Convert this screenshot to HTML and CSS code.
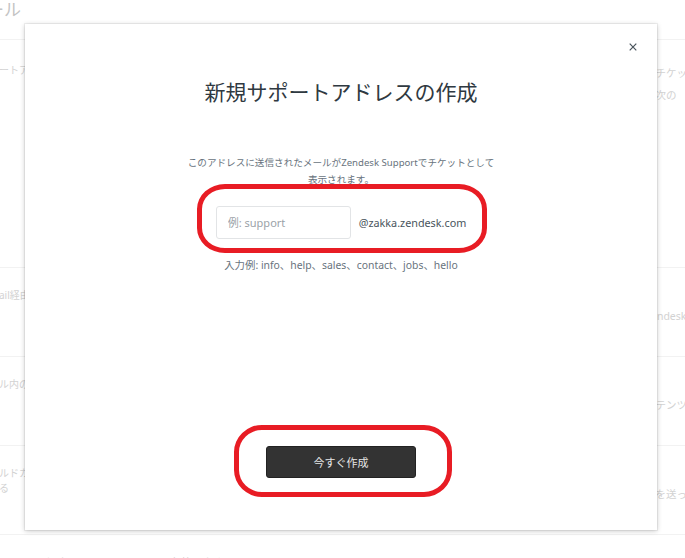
FILE: index.html
```html
<!DOCTYPE html>
<html lang="ja">
<head>
<meta charset="utf-8">
<title>新規サポートアドレスの作成</title>
<link rel="stylesheet" href="styles.css">
</head>
<body>
<div class="page">
  <header class="page-head"><h1 class="page-title">メール</h1></header>
  <div class="row row-first">
    <div class="label label-first">ートアドレス</div>
    <div class="content"></div>
    <div class="desc desc-first">てチケット<br>、次の</div>
  </div>
  <div class="row">
    <div class="label">ail経由のメール</div>
    <div class="content"></div>
    <div class="desc"><br>Zendesk</div>
  </div>
  <div class="row">
    <div class="label">ル内のリンク</div>
    <div class="content"></div>
    <div class="desc"><br>ンテンツ</div>
  </div>
  <div class="row">
    <div class="label">ルドカード<br>る</div>
    <div class="content"></div>
    <div class="desc"><br>ルを送っ</div>
  </div>
  <div class="row">
    <div class="label label-large">るメール返信</div>
    <div class="content"><span class="check">✓</span>有効にする</div>
    <div class="desc"></div>
  </div>
</div>

<div class="modal">
  <button class="close" aria-label="閉じる">
    <svg width="8" height="8" viewBox="0 0 8 8"><path d="M0.7 0.7 L7.3 7.3 M7.3 0.7 L0.7 7.3" stroke="#49545c" stroke-width="1.2" fill="none"/></svg>
  </button>
  <h2 class="modal-title">新規サポートアドレスの作成</h2>
  <p class="modal-desc">このアドレスに送信されたメールがZendesk Supportでチケットとして<br>表示されます。</p>
  <div class="field-row">
    <input class="field" type="text" placeholder="例: support">
    <span class="domain">@zakka.zendesk.com</span>
  </div>
  <p class="hint">入力例: info、help、sales、contact、jobs、hello</p>
  <button class="create">今すぐ作成</button>
</div>

<div class="mark mark-field"></div>
<div class="mark mark-button"></div>
</body>
</html>
```
FILE: styles.css
```css
* { box-sizing: border-box; }
html, body {
  margin: 0;
  padding: 0;
  background: #fff;
  overflow: hidden;
}
body {
  width: 685px;
  height: 558px;
  font-family: "Noto Sans", "Noto Sans CJK JP", sans-serif;
  position: relative;
}
.page {
  width: 685px;
  height: 558px;
  overflow: hidden;
  color: #d2d2d2;
  font-size: 10px;
}
.page-head {
  height: 40px;
  border-bottom: 1px solid #f2f2f2;
  overflow: hidden;
}
.page-title {
  margin: -2px 0 0 -30px;
  font-size: 17px;
  line-height: 24px;
  font-weight: 400;
  color: #c4c4c4;
  white-space: nowrap;
}
.row {
  display: flex;
  height: 89px;
  border-bottom: 1px solid #f2f2f2;
  white-space: nowrap;
}
.row-first { height: 228px; }
.label {
  width: 155px;
  margin-left: -1px;
  padding-top: 20px;
  line-height: 15px;
}
.label-first { padding-top: 23px; }
.label-large {
  font-size: 12px;
  padding-top: 21px;
}
.content {
  flex: 1;
  padding-top: 20px;
  line-height: 15px;
  display: flex;
  align-items: flex-start;
  gap: 6px;
  font-size: 10.5px;
}
.check {
  display: inline-flex;
  align-items: center;
  justify-content: center;
  width: 10px;
  height: 10px;
  margin-top: 3px;
  border: 1px solid #d2d2d2;
  border-radius: 2px;
  font-size: 8px;
  line-height: 1;
}
.desc {
  width: 40px;
  padding-top: 18px;
  line-height: 20px;
  font-size: 10.5px;
}
.desc-first {
  padding-top: 22px;
  line-height: 22px;
}

.modal {
  position: absolute;
  left: 25px;
  top: 24px;
  width: 632px;
  height: 506px;
  background: #fff;
  box-shadow: 0 0 0 1px rgba(0,0,0,0.05), 0 1px 5px rgba(0,0,0,0.22);
  display: flex;
  flex-direction: column;
  align-items: center;
  padding: 53px 0 52px;
}
.close {
  position: absolute;
  right: 20px;
  top: 19px;
  width: 8px;
  height: 8px;
  padding: 0;
  border: 0;
  background: none;
  display: flex;
}
.modal-title {
  margin: 0;
  font-size: 21px;
  line-height: 30px;
  font-weight: 400;
  color: #2f3941;
}
.modal-desc {
  margin: 47px 0 0;
  font-size: 9.6px;
  line-height: 17px;
  color: #68737d;
  text-align: center;
}
.field-row {
  margin-top: 18px;
  display: flex;
  align-items: center;
  gap: 8px;
}
.field {
  width: 135px;
  height: 33px;
  border: 1px solid #e2e4e6;
  border-radius: 3px;
  padding: 0 11px;
  font-family: inherit;
  font-size: 11px;
  color: #2f3941;
  outline: none;
}
.field::placeholder { color: #9ba2a8; }
.domain {
  font-size: 10.8px;
  color: #49545c;
}
.hint {
  margin: 18px 0 0;
  font-size: 10.4px;
  line-height: 17px;
  color: #68737d;
}
.create {
  margin-top: auto;
  width: 150px;
  height: 32px;
  border: 1px solid #222;
  border-radius: 3px;
  background: #333;
  color: #e6e6e6;
  font-family: inherit;
  font-size: 11px;
}

.mark {
  position: absolute;
  border: 5px solid #e81c24;
  pointer-events: none;
}
.mark-field {
  left: 197px;
  top: 184px;
  width: 290px;
  height: 69px;
  border-radius: 28px / 25px;
}
.mark-button {
  left: 234px;
  top: 425px;
  width: 218px;
  height: 72px;
  border-radius: 28px / 27px;
}
```
